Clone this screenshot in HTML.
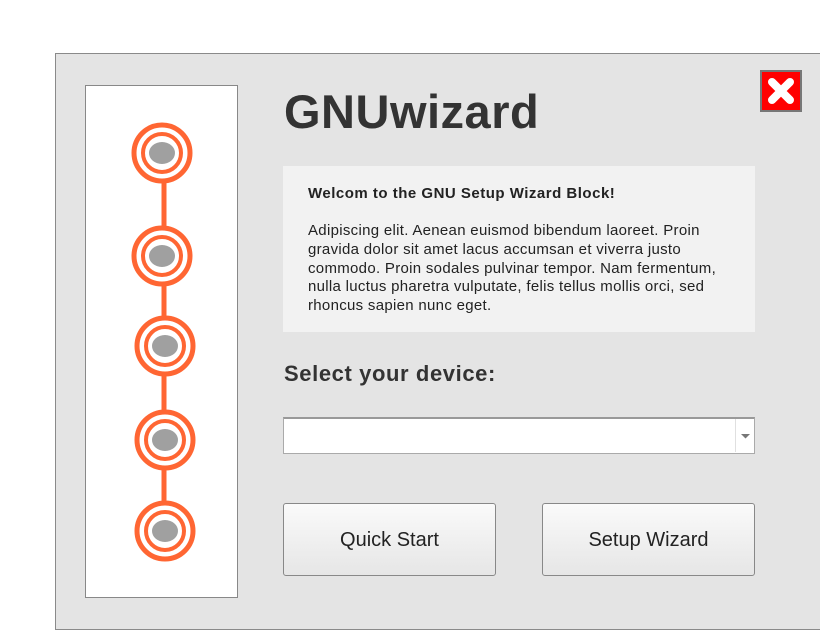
<!DOCTYPE html>
<html><head><style>
body{margin:0;width:820px;height:630px;background:#fff;position:relative;overflow:hidden;font-family:"Liberation Sans",sans-serif}
.panel{position:absolute;left:55px;top:53px;width:780px;height:575px;background:#e4e4e4;border:1px solid #8a8a8a}
.side{position:absolute;left:85px;top:85px;width:151px;height:511px;background:#fff;border:1px solid #888}
.title{position:absolute;left:284px;top:84px;font-size:47px;font-weight:bold;color:#333;letter-spacing:0.5px}
.box{position:absolute;left:283px;top:166px;width:472px;height:166px;background:#f2f2f2}
.box h4{margin:0;position:absolute;left:25px;top:19px;font-size:15px;letter-spacing:0.5px;color:#222}
.box p{margin:0;position:absolute;left:25px;top:56px;width:430px;font-size:15px;letter-spacing:0.3px;line-height:18.8px;color:#222}
.sel{position:absolute;left:284px;top:361px;font-size:22px;font-weight:bold;color:#333;letter-spacing:0.6px}
.drop{position:absolute;left:283px;top:417px;width:470px;height:34px;background:#fff;border:1px solid #aaa;border-top:2px solid #999}
.btn{position:absolute;top:503px;width:211px;height:71px;border:1px solid #888;border-radius:3px;background:linear-gradient(#fafafa,#e6e6e6);font-size:20px;color:#222;text-align:center;line-height:72px}
.x{position:absolute;left:760px;top:70px;width:38px;height:38px;background:#f00;border:2px solid #777}
</style></head><body>
<div class="panel"></div>
<div class="side"></div>
<div class="drop"></div>
<svg style="position:absolute;left:0;top:0" width="820" height="630">
<line x1="164" y1="153" x2="164" y2="531" stroke="#ff6633" stroke-width="5"/>
<g>
<circle cx="162" cy="153" r="28" fill="#fff" stroke="#ff6633" stroke-width="5"/><circle cx="162" cy="153" r="19" fill="#fff" stroke="#ff6633" stroke-width="4"/><ellipse cx="162" cy="153" rx="13" ry="11" fill="#a0a0a0"/>
<circle cx="162" cy="256" r="28" fill="#fff" stroke="#ff6633" stroke-width="5"/><circle cx="162" cy="256" r="19" fill="#fff" stroke="#ff6633" stroke-width="4"/><ellipse cx="162" cy="256" rx="13" ry="11" fill="#a0a0a0"/>
<circle cx="165" cy="346" r="28" fill="#fff" stroke="#ff6633" stroke-width="5"/><circle cx="165" cy="346" r="19" fill="#fff" stroke="#ff6633" stroke-width="4"/><ellipse cx="165" cy="346" rx="13" ry="11" fill="#a0a0a0"/>
<circle cx="165" cy="440" r="28" fill="#fff" stroke="#ff6633" stroke-width="5"/><circle cx="165" cy="440" r="19" fill="#fff" stroke="#ff6633" stroke-width="4"/><ellipse cx="165" cy="440" rx="13" ry="11" fill="#a0a0a0"/>
<circle cx="165" cy="531" r="28" fill="#fff" stroke="#ff6633" stroke-width="5"/><circle cx="165" cy="531" r="19" fill="#fff" stroke="#ff6633" stroke-width="4"/><ellipse cx="165" cy="531" rx="13" ry="11" fill="#a0a0a0"/>
</g>
<line x1="735.5" y1="419" x2="735.5" y2="452" stroke="#e0e0e0"/>
<path d="M741 434h9l-4.5 4.5z" fill="#777"/>
</svg>
<div class="x"><svg width="38" height="38"><path d="M10 10L28 28M28 10L10 28" stroke="#fff" stroke-width="8" stroke-linecap="round"/></svg></div>
<div class="title">GNUwizard</div>
<div class="box"><h4>Welcom to the GNU Setup Wizard Block!</h4><p>Adipiscing elit. Aenean euismod bibendum laoreet. Proin gravida dolor sit amet lacus accumsan et viverra justo commodo. Proin sodales pulvinar tempor. Nam fermentum, nulla luctus pharetra vulputate, felis tellus mollis orci, sed rhoncus sapien nunc eget.</p></div>
<div class="sel">Select your device:</div>
<div class="btn" style="left:283px">Quick Start</div>
<div class="btn" style="left:542px">Setup Wizard</div>
</body></html>
